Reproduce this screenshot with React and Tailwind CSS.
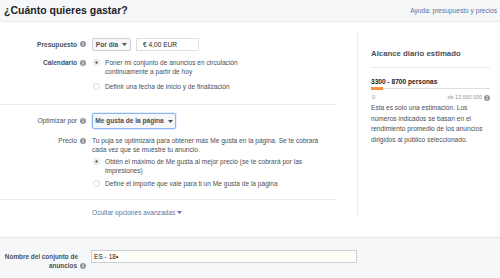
import React from 'react';

const font = { fontFamily: '"Liberation Sans", Arial, sans-serif' };

function Info() {
  return (
    <svg width="6" height="6" viewBox="0 0 6 6" className="inline-block shrink-0">
      <circle cx="3" cy="3" r="3" fill="#90949c" />
      <rect x="2.6" y="2.5" width="0.9" height="2.2" fill="#fff" />
      <rect x="2.6" y="1.2" width="0.9" height="0.8" fill="#fff" />
    </svg>
  );
}

function Radio({ on }) {
  return (
    <svg width="7" height="7" viewBox="0 0 7 7" className="shrink-0">
      <circle cx="3.5" cy="3.5" r="3" fill="#fff" stroke="#ccd0d5" strokeWidth="0.8" />
      {on && <circle cx="3.5" cy="3.5" r="1.2" fill="#4b4f56" />}
    </svg>
  );
}

function Caret({ color = '#4b4f56' }) {
  return (
    <svg width="5" height="3" viewBox="0 0 5 3" className="shrink-0">
      <path d="M0 0 L5 0 L2.5 3 Z" fill={color} />
    </svg>
  );
}

function Label({ children, bold = true, tall }) {
  return (
    <div
      className={`w-[92px] pr-[6px] flex justify-end items-center gap-[3px] text-[6.6px] text-[#4b4f56] shrink-0 ${bold ? 'font-bold' : 'font-normal'} ${tall ? 'h-[9px]' : ''}`}
    >
      <span>{children}</span>
      <Info />
    </div>
  );
}

function Option({ on, lines }) {
  return (
    <div className="flex items-start gap-[5px]">
      <div className="h-[9px] flex items-center"><Radio on={on} /></div>
      <div className="text-[6.6px] leading-[9px] text-[#4b4f56]">
        {lines.map((l, i) => <div key={i}>{l}</div>)}
      </div>
    </div>
  );
}

export default function App() {
  return (
    <div className="w-[500px] h-[278px] overflow-hidden bg-white" style={font}>
      {/* header */}
      <div className="h-[22px] bg-[#f6f7f9] border-b border-[#e9eaed] flex items-center justify-between pl-[4px] pr-[3px]">
        <span className="text-[10.5px] font-bold text-[#1d2129] leading-none">¿Cuánto quieres gastar?</span>
        <span className="text-[6.6px] text-[#5b72a5]">Ayuda: presupuesto y precios</span>
      </div>

      <div className="flex h-[215px]">
        {/* left */}
        <div className="w-[357px] shrink-0 pt-[16px]">
          <div className="flex items-center">
            <Label>Presupuesto</Label>
            <div className="flex items-center gap-[5px]">
              <div className="h-[13px] w-[39px] border border-[#ccd0d5] bg-[#f6f7f9] rounded-[2px] flex items-center justify-center gap-[4px] text-[6.6px] font-bold text-[#4b4f56]">
                Por día <Caret />
              </div>
              <div className="h-[13px] w-[63px] border border-[#dddfe2] bg-white flex items-center pl-[6px] text-[6.6px] text-[#1d2129]">
                € 4,00 EUR
              </div>
            </div>
          </div>

          <div className="flex items-start mt-[7px]">
            <Label tall>Calendario</Label>
            <div className="flex flex-col gap-[6px] pl-[1px]">
              <Option on lines={['Poner mi conjunto de anuncios en circulación', 'continuamente a partir de hoy']} />
              <Option lines={['Definir una fecha de inicio y de finalización']} />
            </div>
          </div>

          <div className="mt-[13px] w-[336px] border-t border-[#e9eaed]" />

          <div className="flex items-center mt-[8px]">
            <Label bold={false}>Optimizar por</Label>
            <div className="h-[16px] w-[84px] border border-[#8ab4f8] bg-[#f6f7f9] rounded-[2px] flex items-center justify-center gap-[4px] text-[6.6px] font-bold text-[#4b4f56] shadow-[0_0_0_1px_#e3edfd]">
              Me gusta de la página <Caret />
            </div>
          </div>

          <div className="flex items-start mt-[7px]">
            <Label bold={false} tall>Precio</Label>
            <div className="flex flex-col">
              <div className="text-[6.6px] leading-[9px] text-[#4b4f56]">
                <div>Tu puja se optimizará para obtener más Me gusta en la página. Se te cobrará</div>
                <div>cada vez que se muestre tu anuncio.</div>
              </div>
              <div className="flex flex-col gap-[4px] mt-[3px] pl-[1px]">
                <Option on lines={['Obtén el máximo de Me gusta al mejor precio (se te cobrará por las', 'impresiones)']} />
                <Option lines={['Define el importe que vale para ti un Me gusta de la página']} />
              </div>
            </div>
          </div>

          <div className="mt-[11px] w-[336px] border-t border-[#e9eaed]" />

          <div className="mt-[8px] pl-[92px] flex items-center gap-[2px] text-[6.6px] leading-[9px] text-[#5b72a5]">
            Ocultar opciones avanzadas <Caret color="#5b72a5" />
          </div>
        </div>

        {/* right */}
        <div className="flex-1 mt-[11px] mb-[21px] border-l border-[#e9eaed] pl-[13px] pr-[10px] pt-[16px]">
          <div className="text-[7.8px] font-bold text-[#4b4f56] leading-[10px]">Alcance diario estimado</div>
          <div className="mt-[8px] border-t border-[#e9eaed]" />
          <div className="mt-[9px] text-[6.6px] font-bold text-[#1d2129] leading-[9px]">3300 - 8700 personas</div>
          <div className="mt-[1px] flex items-center">
            <div className="w-[12px] h-[3px] bg-[#f7923b]" />
            <div className="flex-1 h-[1px] bg-[#dddfe2]" />
          </div>
          <div className="mt-[4px] flex justify-between items-center text-[5.4px] text-[#90949c] leading-[7px]">
            <span className="pl-[1px]">0</span>
            <span className="flex items-center gap-[2px]">de 13 000 000 <Info /></span>
          </div>
          <div className="mt-[2px] text-[6.6px] leading-[10.5px] text-[#4b4f56]">
            Esta es solo una estimación. Los números indicados se basan en el rendimiento promedio de los anuncios dirigidos al público seleccionado.
          </div>
        </div>
      </div>

      {/* footer */}
      <div className="h-[41px] bg-[#f6f7f9] border-t border-[#e5e6e9] flex items-start pt-[12px]">
        <div className="w-[86px] shrink-0 text-right text-[6.4px] font-bold text-[#4b4f56] leading-[9px] pt-[2px]">
          <div className="pr-[8px]">Nombre del conjunto de</div>
          <div className="flex justify-end items-center gap-[3px]">anuncios <Info /></div>
        </div>
        <div className="ml-[5px] w-[266px] h-[13px] border border-[#ccd0d5] bg-[#fefef8] flex items-center pl-[2px] text-[6.6px] text-[#1d2129]">
          ES - 18•
        </div>
      </div>
    </div>
  );
}
